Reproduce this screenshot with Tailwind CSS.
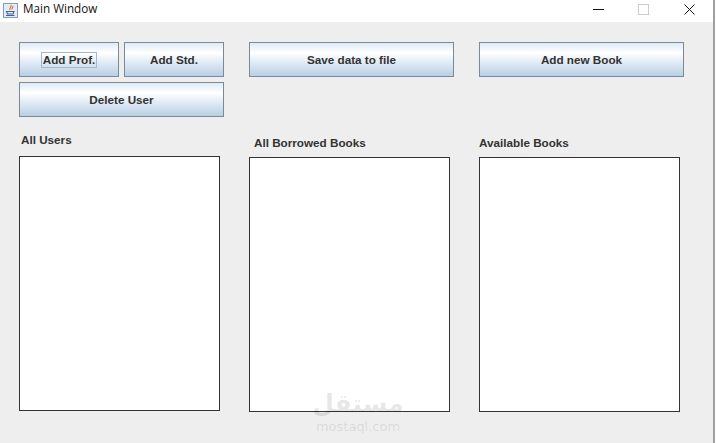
<!DOCTYPE html>
<html lang="en">
<head>
  <meta charset="UTF-8" />
  <title>Main Window</title>
  <script src="https://cdn.jsdelivr.net/npm/@tailwindcss/browser@4"></script>
</head>
<body class="w-[716px] h-[443px] overflow-hidden bg-[#eeeeee] font-['Liberation_Sans',sans-serif] relative">
  <!-- title bar -->
  <header class="h-[22px] pb-[4px] bg-white flex items-center font-['Open_Sans',sans-serif] text-[11.700px] text-[#111]">
    <svg class="ml-[2px] w-[17px] h-[17px] mt-[2px]" viewBox="0 0 17 17">
      <rect x="1.500" y="1.500" width="14" height="14" fill="#e6ecf5" stroke="#7f9cc8" />
      <path d="M9 3c1 1.500-2 3-1 5M11 4c.5 1-1.500 2-1 3.500" fill="none" stroke="#d9731a" stroke-width="1.100" />
      <path d="M4.500 9.500h7.500l-1 2.500H5.500zM4 13.500h8.500" fill="none" stroke="#46638f" stroke-width="1.100" />
    </svg>
    <span class="ml-[4px]">Main Window</span>
    <div class="ml-auto flex items-center">
      <svg class="w-[11px] h-[11px]" viewBox="0 0 11 11"><path d="M0 5.500h11" stroke="#111" /></svg>
      <svg class="ml-[34px] w-[11px] h-[11px]" viewBox="0 0 11 11"><rect x=".5" y=".5" width="10" height="10" fill="none" stroke="#ccc" /></svg>
      <svg class="ml-[35px] mr-[21px] w-[11px] h-[11px]" viewBox="0 0 11 11"><path d="M.5.500l10 10M10.500.500l-10 10" stroke="#111" /></svg>
    </div>
  </header>

  <main class="pt-[20px] pl-[19px] grid grid-cols-[205px_205px_205px] gap-x-[25px] text-[11.700px] font-bold text-[#333]">
    <!-- users column -->
    <section>
      <div class="grid grid-cols-2 gap-[5px]">
        <button class="h-[35px] border border-[#7a8a99] bg-gradient-to-b from-[#dfeaf5] from-0% via-white via-30% to-[#b8cfe5] flex items-center justify-center">
          <span class="border border-[#a3b8cc] leading-[14px] px-[1px]">Add Prof.</span>
        </button>
        <button class="h-[35px] border border-[#7a8a99] bg-gradient-to-b from-[#dfeaf5] from-0% via-white via-30% to-[#b8cfe5]">Add Std.</button>
        <button class="col-span-2 h-[35px] border border-[#7a8a99] bg-gradient-to-b from-[#dfeaf5] from-0% via-white via-30% to-[#b8cfe5]">Delete User</button>
      </div>
      <h2 class="mt-[15px] ml-[2px] h-[15px] leading-[15px]">All Users</h2>
      <div class="mt-[9px] w-[201px] h-[255px] bg-white border border-[#333]"></div>
    </section>

    <!-- borrowed column -->
    <section>
      <button class="w-full h-[35px] border border-[#7a8a99] bg-gradient-to-b from-[#dfeaf5] from-0% via-white via-30% to-[#b8cfe5]">Save data to file</button>
      <h2 class="mt-[58px] ml-[5px] h-[15px] leading-[15px]">All Borrowed Books</h2>
      <div class="mt-[7px] w-[201px] h-[255px] bg-white border border-[#333]"></div>
    </section>

    <!-- available column -->
    <section>
      <button class="w-full h-[35px] border border-[#7a8a99] bg-gradient-to-b from-[#dfeaf5] from-0% via-white via-30% to-[#b8cfe5]">Add new Book</button>
      <h2 class="mt-[58px] h-[15px] leading-[15px]">Available Books</h2>
      <div class="mt-[7px] w-[201px] h-[255px] bg-white border border-[#333]"></div>
    </section>
  </main>

  <!-- window edge -->
  <div class="absolute right-0 top-0 bottom-0 w-[3px] border-l-2 border-[#a0a0a0] bg-white"></div>

  <!-- watermark -->
  <div class="absolute left-[312px] top-[391px] w-[92px] text-center text-black/10 font-['DejaVu_Sans',sans-serif] leading-none">
    <div class="text-[25px] h-[29px] font-bold" dir="rtl">مستقل</div>
    <div class="text-[13px]">mostaql.com</div>
  </div>
</body>
</html>
